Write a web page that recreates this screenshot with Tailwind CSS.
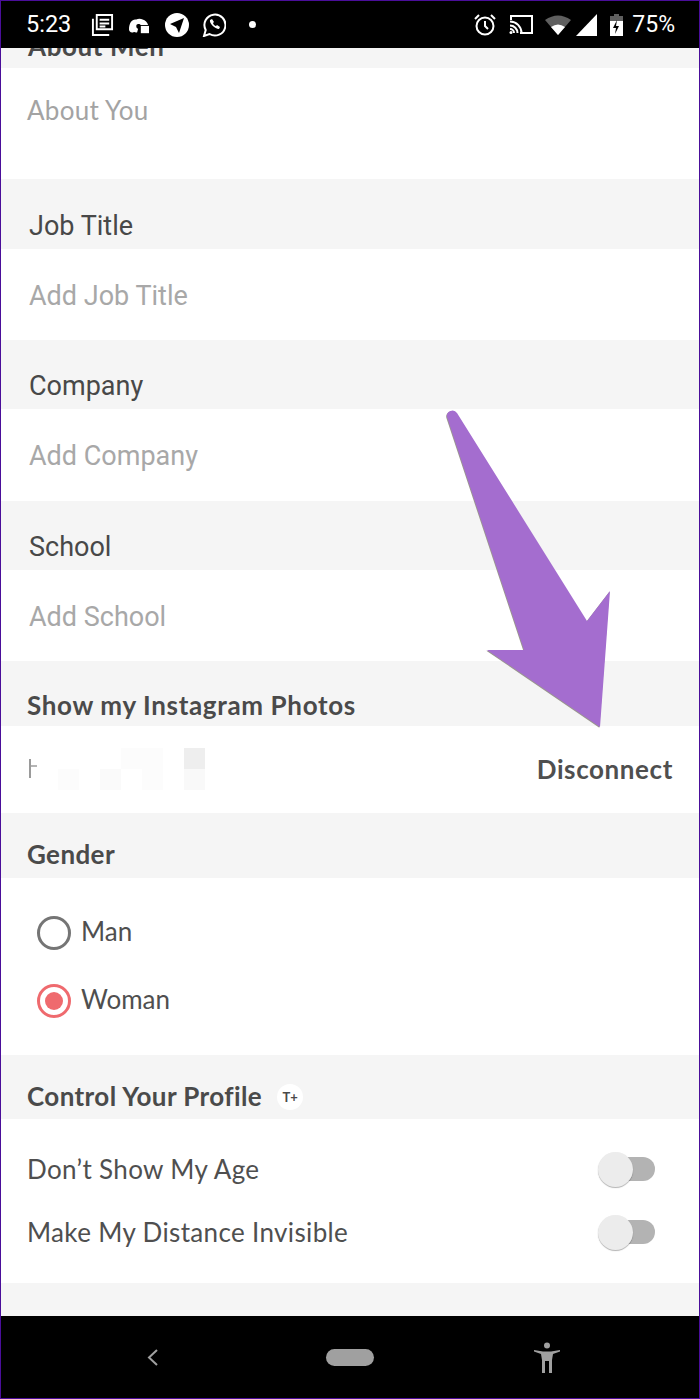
<!DOCTYPE html>
<html lang="en">
<head>
    <meta charset="UTF-8">
    <meta name="viewport" content="width=device-width, initial-scale=1.0">
    <title>Edit Profile</title>
    <script src="https://cdn.jsdelivr.net/npm/@tailwindcss/browser@4"></script>
</head>
<body class="bg-white">
    <div class="relative w-[700px] h-[1399px] overflow-hidden flex flex-col border border-[#4a0e9a] font-['Lato',sans-serif] text-[#4a4a4a]">

        <!-- Status bar -->
        <div class="h-[47px] shrink-0 bg-black text-white flex items-center font-['Roboto',sans-serif] relative z-10">
            <span class="ml-[25px] text-[23.5px] leading-none">5:23</span>
            <svg class="ml-[20px]" width="23" height="23" viewBox="0 0 24 24" fill="none" stroke="white" stroke-width="2"><path d="M6 2h16v15H6zM2 6v17h17"/><path d="M9 7h10M9 11h10M9 14h6"/></svg>
            <svg class="ml-[14px]" width="22" height="20" viewBox="0 0 24 22" fill="white"><path d="M1 16C1 8 5 4 9 5c2-1 5-1 7 0 3 1 5 3 6 6h-8c-1-1-2-1-3-1s-2 1-2 2c0 2 1 3 2 3l-1 4c-2 1-3-1-4 0-3 1-5-1-5-3z"/><rect x="14" y="12" width="9" height="8"/></svg>
            <svg class="ml-[15px]" width="24" height="24" viewBox="0 0 24 24"><circle cx="12" cy="12" r="12" fill="white"/><path d="M5 11l14-6-5 15-3-6z" fill="black"/></svg>
            <svg class="ml-[13px]" width="24" height="24" viewBox="0 0 24 24" fill="none" stroke="white" stroke-width="2"><path d="M2 23l1.700-6A10.500 10.500 0 1 1 7.500 21z"/><path d="M8 7c-1 3 5 9 9 9l1-2-3-2-1 1c-1 0-3-2-3-3l1-1-2-3z" fill="white" stroke="none"/></svg>
            <span class="ml-[23px] w-[7px] h-[7px] rounded-full bg-white"></span>
            <div class="ml-auto flex items-center">
                <svg width="22" height="24" viewBox="0 0 22 24" fill="none" stroke="white" stroke-width="2"><circle cx="11" cy="13" r="8.500"/><path d="M11 8v5l3 3M1 6l4-4M21 6l-4-4"/></svg>
                <svg class="ml-[13px]" width="25" height="21" viewBox="0 0 25 21" fill="none" stroke="white" stroke-width="2"><path d="M2 6V2h21v17H11"/><path d="M1 7.500a11.500 11.500 0 0 1 11.500 11.500M1 11.500a7.500 7.500 0 0 1 7.500 7.500M1 15a4 4 0 0 1 4 4"/><circle cx="2" cy="18.500" r="1.500" fill="white" stroke="none"/></svg>
                <svg class="ml-[11px]" width="26" height="20" viewBox="0 0 26 20"><path d="M0 5Q13-4 26 5L13 20z" fill="#5f5f5f"/><path d="M6 12Q13 7 20 12L13 20z" fill="white"/></svg>
                <svg class="ml-[5px]" width="22" height="22" viewBox="0 0 22 22"><path d="M21 0v22H0z" fill="white"/></svg>
                <svg class="ml-[12px]" width="13" height="22" viewBox="0 0 13 22"><rect x="4" y="0" width="5" height="3" fill="#5f5f5f"/><rect y="2" width="13" height="6" fill="#5f5f5f"/><rect y="7" width="13" height="15" fill="white"/><path d="M7 6l-4 8h3l-1 6 4-8H6z" fill="black"/></svg>
                <span class="ml-[9px] mr-[24px] text-[23px] leading-none">75%</span>
            </div>
        </div>

        <!-- Scrolled content -->
        <div class="flex-1 flex flex-col bg-[#f5f5f5]">
            <div class="h-[20px] overflow-hidden relative">
                <span class="absolute left-[27px] top-[-16px] text-[26px] tracking-[0.6px] font-bold leading-[28px] text-[#4a4a4a]">About Men</span>
            </div>
            <div class="h-[111px] bg-white pl-[26px] pt-[27px]">
                <span class="text-[26px] tracking-[0.3px] leading-[30px] text-[#a3a3a3]">About You</span>
            </div>

            <div class="h-[70px] flex items-end pb-[8px] pl-[28px] font-['Roboto',sans-serif] text-[27px] leading-[30px] text-[#484848]">Job Title</div>
            <div class="h-[91px] bg-white pl-[28px] pt-[32px] font-['Roboto',sans-serif] text-[27px] leading-[30px] text-[#a8a8a8]">Add Job Title</div>

            <div class="h-[69px] flex items-end pb-[8px] pl-[28px] font-['Roboto',sans-serif] text-[27px] leading-[30px] text-[#484848]">Company</div>
            <div class="h-[92px] bg-white pl-[28px] pt-[32px] font-['Roboto',sans-serif] text-[27px] leading-[30px] text-[#a8a8a8]">Add Company</div>

            <div class="h-[69px] flex items-end pb-[8px] pl-[28px] font-['Roboto',sans-serif] text-[27px] leading-[30px] text-[#484848]">School</div>
            <div class="h-[91px] bg-white pl-[28px] pt-[32px] font-['Roboto',sans-serif] text-[27px] leading-[30px] text-[#a8a8a8]">Add School</div>

            <div class="h-[65px] flex items-end pb-[6px] pl-[26px] text-[26px] tracking-[0.65px] leading-[30px] font-bold text-[#4a4a4a]">Show my Instagram Photos</div>
            <div class="relative h-[87px] bg-white flex items-center justify-between pl-[28px] pr-[26px]">
                <span class="relative w-[8px] h-[19px] border-l-2 border-[#9a9a9a] top-[-1px]"><span class="absolute left-0 top-[6px] w-[6px] h-[2px] bg-[#b5b5b5]"></span></span>
                <span class="relative top-[-1px] text-[26px] tracking-[0.6px] leading-[30px] font-bold text-[#4f4f4f]">Disconnect</span>
                <!-- blurred-out username squares -->
                <span class="absolute left-[183px] top-[22px] w-[21px] h-[21px] bg-[#eeeeee]"></span>
                <span class="absolute left-[183px] top-[43px] w-[21px] h-[21px] bg-[#f9f9f9]"></span>
                <span class="absolute left-[120px] top-[22px] w-[42px] h-[21px] bg-[#fcfcfc]"></span>
                <span class="absolute left-[99px] top-[43px] w-[21px] h-[21px] bg-[#fafafa]"></span>
                <span class="absolute left-[141px] top-[43px] w-[21px] h-[21px] bg-[#fcfcfc]"></span>
                <span class="absolute left-[57px] top-[43px] w-[21px] h-[21px] bg-[#fcfcfc]"></span>
            </div>

            <div class="h-[65px] flex items-end pb-[9px] pl-[26px] text-[26px] tracking-[0.4px] leading-[30px] font-bold text-[#4a4a4a]">Gender</div>
            <div class="h-[177px] bg-white flex flex-col pl-[36px] pt-[38px] gap-[34px] text-[26px] leading-[34px] text-[#4f4f4f]">
                <div class="flex items-center gap-[10px]">
                    <span class="w-[34px] h-[34px] rounded-full border-[3px] border-[#757575]"></span>
                    <span class="relative top-[-2px]">Man</span>
                </div>
                <div class="flex items-center gap-[10px]">
                    <span class="w-[34px] h-[34px] rounded-full border-[3px] border-[#ef6a6e] flex items-center justify-center"><span class="w-[18px] h-[18px] rounded-full bg-[#ef6a6e]"></span></span>
                    <span class="relative top-[-2px]">Woman</span>
                </div>
            </div>

            <div class="h-[64px] flex items-end pb-[8px] pl-[26px] text-[26px] tracking-[0.4px] leading-[30px] font-bold text-[#4a4a4a]">
                Control Your Profile
                <span class="ml-[15px] mb-[1px] w-[26px] h-[26px] rounded-full bg-white flex items-center justify-center text-[13px] tracking-normal leading-none font-bold">T+</span>
            </div>
            <div class="h-[164px] bg-white flex flex-col pl-[26px] pr-[44px] pt-[35px] gap-[33px] text-[26px] tracking-[0.35px] leading-[30px] text-[#4f4f4f]">
                <div class="flex items-center justify-between">
                    <span>Don’t Show My Age</span>
                    <span class="relative w-[44px] h-[24px] rounded-full bg-[#b3b3b3]"><span class="absolute left-[-13px] top-[-5px] w-[35px] h-[35px] rounded-full bg-[#ececec] shadow-[0_1px_1px_rgba(0,0,0,0.3)]"></span></span>
                </div>
                <div class="flex items-center justify-between">
                    <span>Make My Distance Invisible</span>
                    <span class="relative w-[44px] h-[24px] rounded-full bg-[#b3b3b3]"><span class="absolute left-[-13px] top-[-5px] w-[35px] h-[35px] rounded-full bg-[#ececec] shadow-[0_1px_1px_rgba(0,0,0,0.3)]"></span></span>
                </div>
            </div>
            <div class="flex-1"></div>
        </div>

        <!-- Navigation bar -->
        <div class="h-[82px] shrink-0 bg-black relative">
            <svg class="absolute left-[145px] top-[32px]" width="14" height="20" viewBox="0 0 14 20" fill="none" stroke="#a0a0a0" stroke-width="2"><path d="M11 2L3 9.500 11 17"/></svg>
            <span class="absolute left-[325px] top-[33px] w-[48px] h-[17px] rounded-full bg-[#a0a0a0]"></span>
            <svg class="absolute left-[532px] top-[26px]" width="28" height="32" viewBox="0 0 28 32" fill="#a0a0a0"><circle cx="14" cy="3.500" r="3"/><path d="M1 8l9 1.500h8L27 8v1.500l-7 2.500-1 6v13h-3V19h-4v12H9V18l-1-6-7-2.500z"/></svg>
        </div>

        <!-- Annotation arrow -->
        <svg class="absolute left-0 top-0 pointer-events-none z-20" width="700" height="1399" viewBox="0 0 700 1399">
            <path d="M446 416a5.500 5.500 0 0 1 10-4L586 620 609 590 599 726 486 649 523 649z" fill="#9a968f" transform="translate(-0.700 0.700)"/>
            <path d="M446 416a5.500 5.500 0 0 1 10-4L586 620 609 590 599 726 486 649 523 649z" fill="#a46dcf"/>
        </svg>
    </div>
</body>
</html>
